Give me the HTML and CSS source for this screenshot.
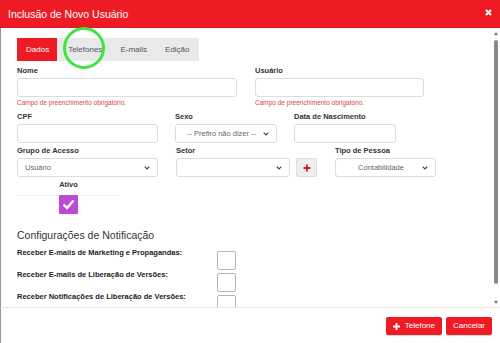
FILE: index.html
```
<!DOCTYPE html>
<html>
<head>
<meta charset="utf-8">
<title>Inclusão de Novo Usuário</title>
<link rel="stylesheet" href="styles.css">
</head>
<body>
<div class="modal">
  <div class="modal-header">
    <span class="modal-title">Inclusão de Novo Usuário</span>
    <svg class="modal-close" width="7" height="7" viewBox="0 0 7 7"><path d="M1 1L6 6M6 1L1 6" stroke="#fff" stroke-width="2"/></svg>
  </div>

  <div class="modal-body">
    <div class="body-content">
      <ul class="tabs">
        <li class="tab active">Dados</li>
        <li class="tab">Telefones</li>
        <li class="tab">E-mails</li>
        <li class="tab">Edição</li>
      </ul>

      <div class="form-row row-first">
        <div class="field w-nome">
          <label>Nome</label>
          <input type="text" class="input">
          <div class="error">Campo de preenchimento obrigatório.</div>
        </div>
        <div class="field w-usuario">
          <label>Usuário</label>
          <input type="text" class="input">
          <div class="error">Campo de preenchimento obrigatório.</div>
        </div>
      </div>

      <div class="form-row row-second">
        <div class="field w-cpf">
          <label>CPF</label>
          <input type="text" class="input">
        </div>
        <div class="field w-sexo">
          <label>Sexo</label>
          <div class="input select">
            <span class="select-text center-text">-- Prefiro não dizer --</span>
            <svg class="chevron" width="6" height="4" viewBox="0 0 6 4"><path d="M0.7 0.7L3 3L5.3 0.7" fill="none" stroke="#444" stroke-width="1.2"/></svg>
          </div>
        </div>
        <div class="field w-data">
          <label>Data de Nascimento</label>
          <input type="text" class="input">
        </div>
      </div>

      <div class="form-row row-third">
        <div class="field w-grupo">
          <label>Grupo de Acesso</label>
          <div class="input select">
            <span class="select-text">Usuário</span>
            <svg class="chevron" width="6" height="4" viewBox="0 0 6 4"><path d="M0.7 0.7L3 3L5.3 0.7" fill="none" stroke="#444" stroke-width="1.2"/></svg>
          </div>
        </div>
        <div class="field w-setor">
          <label>Setor</label>
          <div class="input-group">
            <div class="input select setor-select">
              <span class="select-text"></span>
              <svg class="chevron" width="6" height="4" viewBox="0 0 6 4"><path d="M0.7 0.7L3 3L5.3 0.7" fill="none" stroke="#444" stroke-width="1.2"/></svg>
            </div>
            <span class="add-btn">
              <svg width="8" height="8" viewBox="0 0 8 8"><path d="M4 0.5V7.5M0.5 4H7.5" stroke="#e5141d" stroke-width="1.8"/></svg>
            </span>
          </div>
        </div>
        <div class="field w-tipo">
          <label>Tipo de Pessoa</label>
          <div class="input select">
            <span class="select-text center-text">Contabilidade</span>
            <svg class="chevron" width="6" height="4" viewBox="0 0 6 4"><path d="M0.7 0.7L3 3L5.3 0.7" fill="none" stroke="#444" stroke-width="1.2"/></svg>
          </div>
        </div>
      </div>

      <div class="ativo">
        <label>Ativo</label>
        <div class="ativo-cell">
          <span class="check-on">
            <svg width="13" height="11" viewBox="0 0 13 11"><path d="M1.5 5.5L5 9L11.5 1.5" fill="none" stroke="#fff" stroke-width="2.4"/></svg>
          </span>
        </div>
      </div>

      <h3 class="section-title">Configurações de Notificação</h3>
      <div class="notif-row"><span class="notif-label">Receber E-mails de Marketing e Propagandas:</span><span class="check-off"></span></div>
      <div class="notif-row"><span class="notif-label">Receber E-mails de Liberação de Versões:</span><span class="check-off"></span></div>
      <div class="notif-row"><span class="notif-label">Receber Notificações de Liberação de Versões:</span><span class="check-off"></span></div>
    </div>

    <div class="scrollbar">
      <span class="arrow-up"></span>
      <span class="thumb"></span>
      <span class="arrow-down"></span>
    </div>
  </div>

  <div class="modal-footer">
    <span class="btn">
      <svg class="plus" width="7" height="7" viewBox="0 0 7 7"><path d="M3.5 0V7M0 3.5H7" stroke="#fff" stroke-width="1.8"/></svg>
      Telefone
    </span>
    <span class="btn">Cancelar</span>
  </div>

  <div class="highlight"></div>
</div>
</body>
</html>
```

FILE: styles.css
```
body{
margin:0;
font-family:"Liberation Sans", Arial, sans-serif;
background:#fff;
}

.modal{
position:relative;
width:500px;
height:343px;
display:flex;
flex-direction:column;
overflow:hidden;
}

.modal-header{
box-sizing:border-box;
height:28px;
flex:none;
background:#ee1b24;
border-bottom:1px solid #d3141c;
display:flex;
align-items:center;
justify-content:space-between;
padding:0 8px;
}

.modal-title{
color:#fff;
font-size:10.5px;
}

.modal-close{
margin-top:-3px;
}

.modal-body{
flex:1;
display:flex;
border-left:1px solid #959595;
overflow:hidden;
}

.body-content{
flex:1;
padding:10px 0 0 16px;
}

/* tabs */
.tabs{
list-style-type:none;
margin:0;
padding:0;
display:flex;
width:fit-content;
background:#e9e9e9;
height:23px;
}

.tab{
font-size:8px;
line-height:23px;
padding:0 9px;
color:#555;
}

.tab.active{
background:#ee1b24;
color:#fff;
padding:0 8px 0 9px;
}

.tab:nth-child(2){
padding-left:11px;
}

/* form */
.form-row{
display:flex;
gap:18px;
}

.row-first{ margin-top:5px; }
.row-second{ margin-top:4px; gap:17px; }
.row-third{ margin-top:3px; }

.field label, .ativo label{
display:block;
font-size:7.5px;
font-weight:bold;
line-height:10px;
color:#333;
margin-bottom:2px;
}

.input{
box-sizing:border-box;
display:block;
width:100%;
height:19px;
border:1px solid #dcdcdc;
border-radius:3px;
background:#fff;
font-family:"Liberation Sans", Arial, sans-serif;
font-size:7.5px;
color:#666;
padding:0 6px;
margin:0;
}

.select{
display:flex;
align-items:center;
padding:0 7px 0 7px;
}

.select-text{
flex:1;
white-space:nowrap;
}

.center-text{
text-align:center;
}

.chevron{
flex:none;
margin-left:3px;
}

.error{
margin-top:1px;
font-size:6.5px;
line-height:10px;
color:#d9434b;
}

.w-nome{ width:220px; }
.w-usuario{ width:169px; }
.w-cpf{ width:141px; }
.w-sexo{ width:102px; }
.w-data{ width:102px; }
.w-grupo{ width:141px; }
.w-setor{ width:141px; }
.w-tipo{ width:101px; }

.input-group{
display:flex;
gap:6px;
}

.setor-select{
width:114px;
}

.add-btn{
box-sizing:border-box;
width:21px;
height:19px;
background:#eeeeee;
border:1px solid #dddddd;
border-radius:2px;
display:flex;
align-items:center;
justify-content:center;
}

/* ativo */
.ativo{
width:103px;
margin-top:3px;
text-align:center;
}

.ativo label{
margin-bottom:5px;
}

.ativo-cell{
border-top:1px solid #f0f0f0;
display:flex;
justify-content:center;
}

.check-on{
width:19px;
height:19px;
margin-top:-1px;
background:#bd4ad4;
border-radius:1px;
display:flex;
align-items:center;
justify-content:center;
}

/* notificacoes */
.section-title{
margin:14px 0 6px 0;
font-size:10.5px;
font-weight:normal;
line-height:14px;
color:#333;
}

.notif-row{
display:flex;
align-items:flex-start;
}

.notif-label{
width:200px;
font-size:7.5px;
font-weight:bold;
line-height:10px;
color:#222;
}

.check-off{
box-sizing:border-box;
width:19px;
height:19px;
margin-top:3px;
border:1px solid #b5b5b5;
border-radius:2px;
background:#fff;
}

/* scrollbar */
.scrollbar{
width:8px;
flex:none;
display:flex;
flex-direction:column;
align-items:center;
padding-top:4px;
}

.arrow-up{
width:0;
height:0;
border-left:2.5px solid transparent;
border-right:2.5px solid transparent;
border-bottom:3px solid #777;
}

.thumb{
width:4px;
height:244px;
margin-top:5px;
background:#8a8a8a;
border-radius:2px;
}

.arrow-down{
margin-top:17px;
width:0;
height:0;
border-left:2.5px solid transparent;
border-right:2.5px solid transparent;
border-top:3px solid #777;
}

/* footer */
.modal-footer{
box-sizing:border-box;
height:36px;
flex:none;
border-top:1px solid #e6e6e6;
border-left:1px solid #959595;
display:flex;
justify-content:flex-end;
align-items:flex-start;
gap:4px;
padding:9px 8px 0 0;
}

.btn{
height:18px;
line-height:18px;
padding:0 7px;
background:#ee1b24;
color:#fff;
font-size:8px;
border-radius:2px;
box-shadow:0 1px 1px rgba(0,0,0,0.15);
display:flex;
align-items:center;
}

.plus{
margin-right:5px;
}

/* annotation circle over the Telefones tab */
.highlight{
position:absolute;
left:63px;
top:27px;
width:36px;
height:36px;
border:3px solid #3ee63e;
border-radius:50%;
}
```
